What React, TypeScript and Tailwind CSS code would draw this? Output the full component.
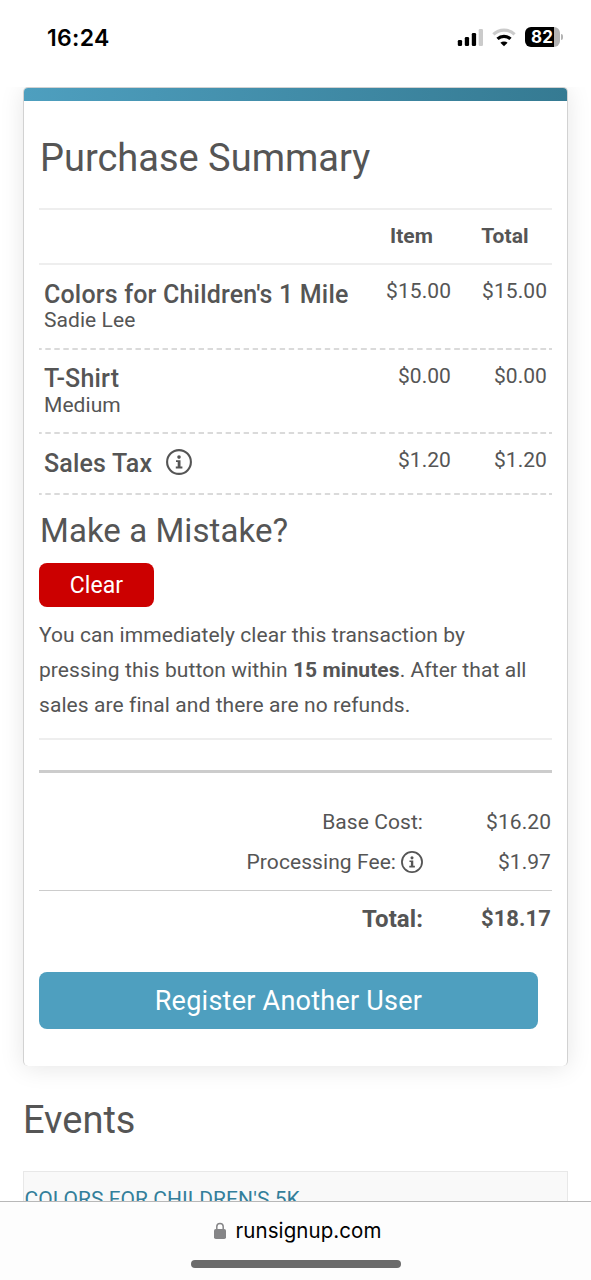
import clsx from "clsx";

const items = [
	{ name: "Colors for Children's 1 Mile", detail: "Sadie Lee", item: "$15.00", total: "$15.00" },
	{ name: "T-Shirt", detail: "Medium", item: "$0.00", total: "$0.00" },
	{ name: "Sales Tax", info: true, item: "$1.20", total: "$1.20" },
];

function InfoIcon({ className }: { className?: string }) {
	return (
		<svg viewBox="0 0 26 26" className={className} fill="none">
			<circle cx="13" cy="13" r="11.9" stroke="currentColor" strokeWidth="2.1" />
			<circle cx="13" cy="8.1" r="1.8" fill="currentColor" />
			<path d="M10 11.2h4.5v6.3h1.9v1.9H9.8v-1.9h1.9v-4.4H10z" fill="currentColor" />
		</svg>
	);
}

function StatusBar() {
	return (
		<div className="flex h-[87px] shrink-0 items-start justify-between pl-[47px] pr-[28px] pt-[24px] font-['Inter',sans-serif] text-black">
			<span className="text-[23px] font-semibold leading-[28px] tracking-[0.3px]">16:24</span>
			<div className="flex items-center pt-[3px]">
				<svg width="27" height="20" viewBox="0 0 27 20">
					<rect x="0.8" y="13" width="4.3" height="6" rx="1.3" />
					<rect x="7.8" y="10" width="4.3" height="9" rx="1.3" />
					<rect x="14.8" y="6" width="4.3" height="13" rx="1.3" />
					<rect x="21.7" y="2" width="4.3" height="17" rx="1.3" fill="#cbcbcb" />
				</svg>
				<svg className="ml-[7px]" width="26" height="20" viewBox="0 0 26 20" fill="none">
					<path d="M2.4 7.4a15.4 15.4 0 0 1 21.2 0" stroke="#cbcbcb" strokeWidth="3.2" />
					<path d="M6.5 11.9a9.4 9.4 0 0 1 13 0" stroke="#000" strokeWidth="3.2" />
					<path d="M13 19.2l-3.6-3.4a5.3 5.3 0 0 1 7.2 0z" fill="#000" />
				</svg>
				<div className="ml-[8px] flex h-[20px] w-[35px] items-center justify-center overflow-hidden rounded-[6px] bg-[linear-gradient(90deg,#000_82%,#b3b3b3_82%)] pr-[1px] text-[17px] font-bold leading-none tracking-[0px] text-white">
					82
				</div>
				<div className="ml-[1px] h-[6px] w-[2px] rounded-r-full bg-[#b3b3b3]" />
			</div>
		</div>
	);
}

const cell =
	"bg-[linear-gradient(90deg,#dadada_29%,transparent_29%,transparent_71%,#dadada_71%)] bg-[length:9px_2px] [background-position:0_100%] [background-repeat:round_no-repeat]";

export default function App() {
	return (
		<div className="flex h-[1280px] w-[591px] flex-col overflow-hidden bg-white font-['Roboto',sans-serif] text-[21px] tracking-[0.07px] text-[#555]">
			<StatusBar />

			<main className="min-h-0 flex-1 overflow-hidden px-[23px]">
				<div className="h-[979px] rounded-[5px] border border-b-0 border-[#d2d2d2] bg-white shadow-[0_2px_24px_rgba(0,0,0,0.1)]">
					<div className="h-[13px] rounded-t-[4px] bg-linear-to-r from-[#4e9fbf] to-[#357a92]" />
					<div className="px-[15px]">
						<h1 className="flex h-[107px] items-center pl-[1px] pt-[6px] text-[38px] leading-none tracking-[0px]">
							Purchase Summary
						</h1>

						<div className="grid h-[57px] grid-cols-[325px_93px_1fr] items-center border-y-2 border-[#eee] font-bold">
							<span />
							<span className="pl-[2px] text-center">Item</span>
							<span className="pl-[1px] text-center">Total</span>
						</div>

						{items.map((row) => (
							<div
								key={row.name}
								className={clsx("grid grid-cols-[325px_93px_1fr]", row.detail ? "h-[84.5px]" : "h-[61px]")}
							>
								<div className={clsx(cell, "pl-[5px] pt-[15px]")}>
									<div className="flex h-[28px] items-center whitespace-nowrap text-[25px] font-medium leading-[28px] tracking-[0.18px]">
										<span className="pt-[1px]">{row.name}</span>
										{row.info && <InfoIcon className="mb-[2px] ml-[14px] size-[26px]" />}
									</div>
									<div className="leading-[24px]">{row.detail}</div>
								</div>
								<div className={clsx(cell, "pr-[6px] pt-[14px] text-right leading-[25px]")}>{row.item}</div>
								<div className={clsx(cell, "pr-[5px] pt-[14px] text-right leading-[25px]")}>{row.total}</div>
							</div>
						))}

						<h2 className="pl-[1px] pt-[16px] text-[33px] leading-[40px]">Make a Mistake?</h2>
						<button className="mt-[12px] block h-[44px] w-[115px] rounded-[8px] bg-[#c00] pt-[2px] text-[23px] text-white">
							Clear
						</button>
						<p className="mt-[11px] h-[122px] whitespace-nowrap border-b-2 border-[#eee] leading-[35px] tracking-[0.08px]">
							You can immediately clear this transaction by
							<br />
							pressing this button within <b>15 minutes</b>. After that all
							<br />
							sales are final and there are no refunds.
						</p>

						<div className="mt-[30px] h-[3px] bg-[#ccc]" />
						<div className="grid h-[118px] grid-cols-[384px_1fr] content-start border-b border-[#ccc] pt-[29px] text-right leading-[40px]">
							<span>Base Cost:</span>
							<span className="pr-[1px]">$16.20</span>
							<span className="flex items-center justify-end">
								Processing Fee:
								<InfoIcon className="ml-[5px] size-[22px]" />
							</span>
							<span className="pr-[1px]">$1.97</span>
						</div>
						<div className="grid h-[81px] grid-cols-[384px_1fr] pt-[8px] text-right font-bold leading-[40px]">
							<span className="text-[24px]">Total:</span>
							<span className="pr-[1px] text-[22px] tracking-[0.1px]">$18.17</span>
						</div>

						<button className="block h-[57px] w-[499px] rounded-[8px] bg-[#4e9fbf] pt-[1px] text-[27px] tracking-[0.25px] text-white">
							Register Another User
						</button>
					</div>
				</div>

				<h1 className="mt-[30px] text-[38px] leading-[48px] tracking-[0px]">Events</h1>
				<div className="mt-[27px] h-[60px] border border-[#e8e8e8] bg-[#f9f9f9] pl-[0.5px] pt-[14px] uppercase leading-[26px] text-[#337f9b]">
					Colors for Children's 5K
				</div>
			</main>

			<footer className="flex h-[79px] shrink-0 flex-col items-center border-t border-[#b8b8b8] bg-[#fdfdfd] font-['Inter',sans-serif] text-black">
				<div className="mt-[14px] flex h-[30px] items-center pl-[4px] text-[20.5px]">
					<svg className="mb-[2px] mr-[10px]" width="12" height="17" viewBox="0 0 12 17">
						<path d="M2.8 8V4.6a3.2 3.2 0 0 1 6.4 0V8" fill="none" stroke="#858587" strokeWidth="1.5" />
						<rect y="7" width="12" height="10" rx="1.8" fill="#858587" />
					</svg>
					runsignup.com
				</div>
				<div className="ml-[1px] mt-[14px] h-[8px] w-[210px] rounded-full bg-[#6b6b6b]" />
			</footer>
		</div>
	);
}
